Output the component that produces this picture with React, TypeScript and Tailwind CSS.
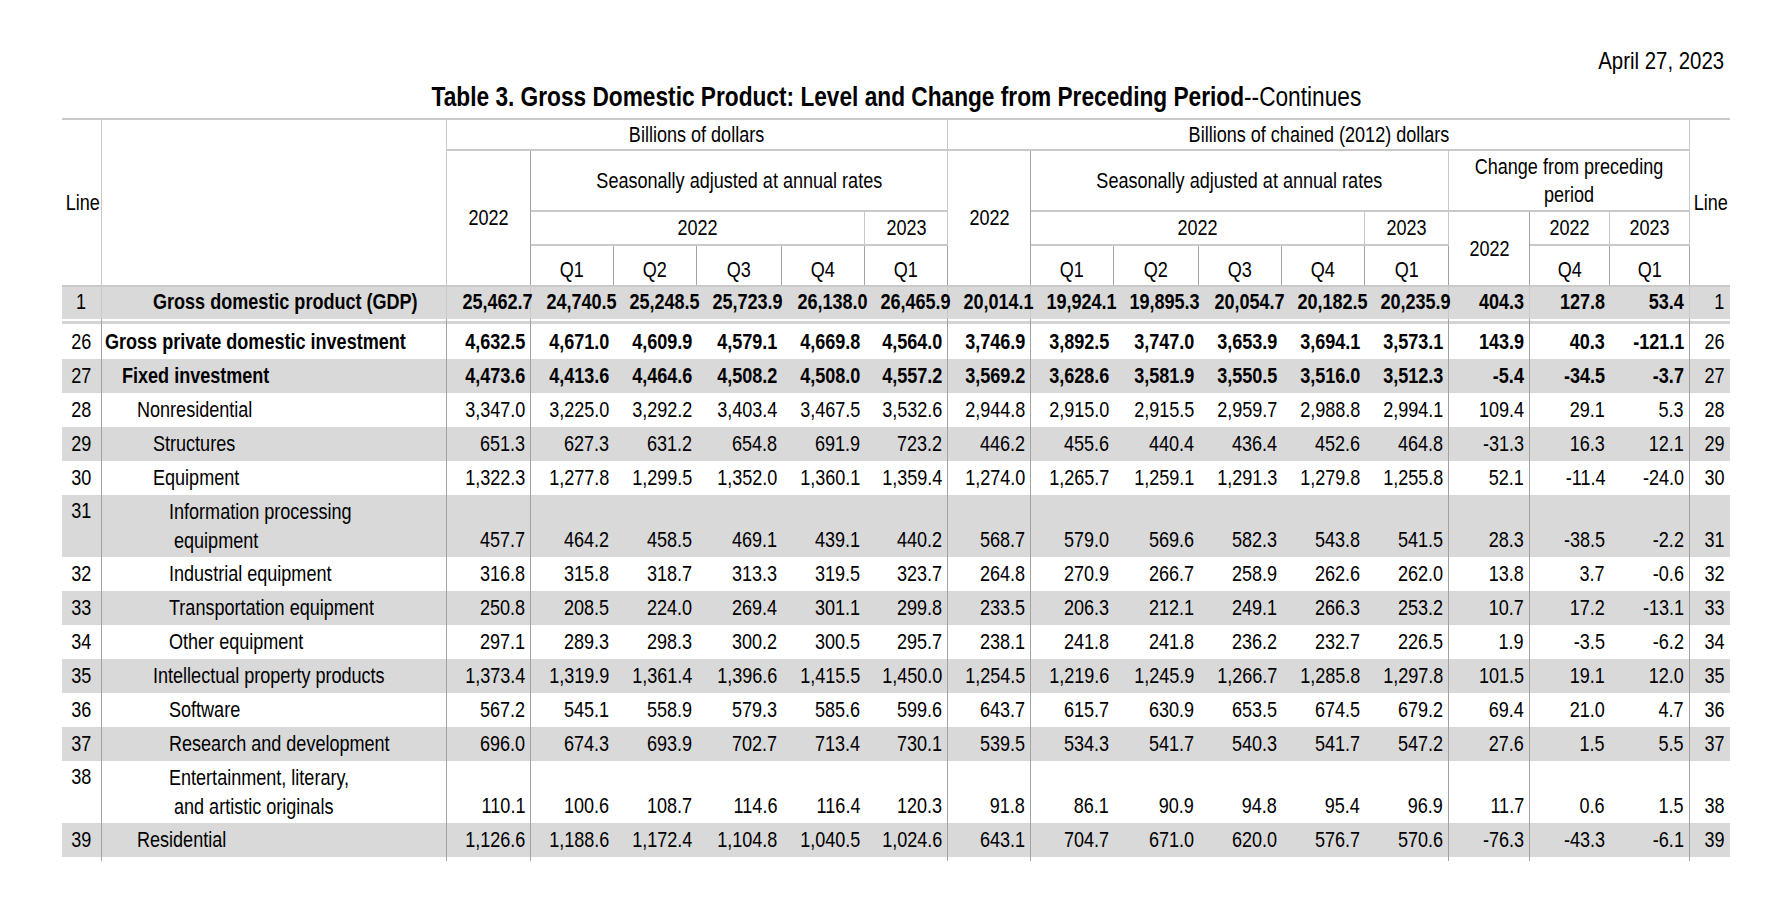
import React from 'react';

type Row = {
  line: string;
  label: string[];
  indent: string;
  bold?: boolean;
  shade?: boolean;
  v: string[];
};

const rows: Row[] = [
  { line: '26', label: ['Gross private domestic investment'], indent: 'pl-[3px]', bold: true, v: ['4,632.5', '4,671.0', '4,609.9', '4,579.1', '4,669.8', '4,564.0', '3,746.9', '3,892.5', '3,747.0', '3,653.9', '3,694.1', '3,573.1', '143.9', '40.3', '-121.1'] },
  { line: '27', label: ['Fixed investment'], indent: 'pl-[20px]', bold: true, shade: true, v: ['4,473.6', '4,413.6', '4,464.6', '4,508.2', '4,508.0', '4,557.2', '3,569.2', '3,628.6', '3,581.9', '3,550.5', '3,516.0', '3,512.3', '-5.4', '-34.5', '-3.7'] },
  { line: '28', label: ['Nonresidential'], indent: 'pl-[35px]', v: ['3,347.0', '3,225.0', '3,292.2', '3,403.4', '3,467.5', '3,532.6', '2,944.8', '2,915.0', '2,915.5', '2,959.7', '2,988.8', '2,994.1', '109.4', '29.1', '5.3'] },
  { line: '29', label: ['Structures'], indent: 'pl-[51px]', shade: true, v: ['651.3', '627.3', '631.2', '654.8', '691.9', '723.2', '446.2', '455.6', '440.4', '436.4', '452.6', '464.8', '-31.3', '16.3', '12.1'] },
  { line: '30', label: ['Equipment'], indent: 'pl-[51px]', v: ['1,322.3', '1,277.8', '1,299.5', '1,352.0', '1,360.1', '1,359.4', '1,274.0', '1,265.7', '1,259.1', '1,291.3', '1,279.8', '1,255.8', '52.1', '-11.4', '-24.0'] },
  { line: '31', label: ['Information processing', 'equipment'], indent: 'pl-[67px]', shade: true, v: ['457.7', '464.2', '458.5', '469.1', '439.1', '440.2', '568.7', '579.0', '569.6', '582.3', '543.8', '541.5', '28.3', '-38.5', '-2.2'] },
  { line: '32', label: ['Industrial equipment'], indent: 'pl-[67px]', v: ['316.8', '315.8', '318.7', '313.3', '319.5', '323.7', '264.8', '270.9', '266.7', '258.9', '262.6', '262.0', '13.8', '3.7', '-0.6'] },
  { line: '33', label: ['Transportation equipment'], indent: 'pl-[67px]', shade: true, v: ['250.8', '208.5', '224.0', '269.4', '301.1', '299.8', '233.5', '206.3', '212.1', '249.1', '266.3', '253.2', '10.7', '17.2', '-13.1'] },
  { line: '34', label: ['Other equipment'], indent: 'pl-[67px]', v: ['297.1', '289.3', '298.3', '300.2', '300.5', '295.7', '238.1', '241.8', '241.8', '236.2', '232.7', '226.5', '1.9', '-3.5', '-6.2'] },
  { line: '35', label: ['Intellectual property products'], indent: 'pl-[51px]', shade: true, v: ['1,373.4', '1,319.9', '1,361.4', '1,396.6', '1,415.5', '1,450.0', '1,254.5', '1,219.6', '1,245.9', '1,266.7', '1,285.8', '1,297.8', '101.5', '19.1', '12.0'] },
  { line: '36', label: ['Software'], indent: 'pl-[67px]', v: ['567.2', '545.1', '558.9', '579.3', '585.6', '599.6', '643.7', '615.7', '630.9', '653.5', '674.5', '679.2', '69.4', '21.0', '4.7'] },
  { line: '37', label: ['Research and development'], indent: 'pl-[67px]', shade: true, v: ['696.0', '674.3', '693.9', '702.7', '713.4', '730.1', '539.5', '534.3', '541.7', '540.3', '541.7', '547.2', '27.6', '1.5', '5.5'] },
  { line: '38', label: ['Entertainment, literary,', 'and artistic originals'], indent: 'pl-[67px]', v: ['110.1', '100.6', '108.7', '114.6', '116.4', '120.3', '91.8', '86.1', '90.9', '94.8', '95.4', '96.9', '11.7', '0.6', '1.5'] },
  { line: '39', label: ['Residential'], indent: 'pl-[35px]', shade: true, v: ['1,126.6', '1,188.6', '1,172.4', '1,104.8', '1,040.5', '1,024.6', '643.1', '704.7', '671.0', '620.0', '576.7', '570.6', '-76.3', '-43.3', '-6.1'] },
];

const gdp = ['25,462.7', '24,740.5', '25,248.5', '25,723.9', '26,138.0', '26,465.9', '20,014.1', '19,924.1', '19,895.3', '20,054.7', '20,182.5', '20,235.9', '404.3', '127.8', '53.4'];

const widths = [40, 345, 84, 83, 83, 85, 83, 83, 83, 83, 85, 83, 83, 84, 81, 80, 80, 40];

// value columns (index into v) that carry a rule on their right side in the body
const ruled = [0, 5, 6, 11, 12, 14];
// same rules, indexed over all table columns
const ruledCols = [0, 1, 2, 7, 8, 13, 14, 16];

const V = 'border-r border-[#a3a3a3]';
const HT = 'border-t-2 border-[#c9c9c9]';
const HB = 'border-b-2 border-[#c9c9c9]';
const hd = 'p-0 text-center font-normal align-middle';

// Arial Narrow is not installed, so squeeze Liberation Sans to its width
function N({ children, o = 'origin-right', s = 'scale-x-[0.82]' }: { children: React.ReactNode; o?: string; s?: string }) {
  return <span className={`inline-block whitespace-nowrap ${s} ${o}`}>{children}</span>;
}

function ValueCells({ v, double }: { v: string[]; double?: boolean }) {
  return (
    <>
      {v.map((x, i) => (
        <td
          key={i}
          className={`p-0 pr-[5px] text-right whitespace-nowrap ${double ? 'align-bottom pb-[3px]' : 'align-middle'} ${ruled.includes(i) ? V : ''}`}
        >
          <N>{x}</N>
        </td>
      ))}
    </>
  );
}

export default function App() {
  return (
    <div className="w-[1792px] h-[916px] overflow-hidden bg-white text-black [font-family:'Liberation_Sans',Arial,sans-serif]">
      <div className="pt-[47px] pr-[68px] text-right text-[24px] leading-[28px]">
        <N s="scale-x-[0.85]">April 27, 2023</N>
      </div>
      <div className="mt-[8px] text-center text-[27px] leading-[28px] whitespace-nowrap">
        <N o="origin-center" s="scale-x-[0.84]">
          <span className="font-bold">Table 3. Gross Domestic Product: Level and Change from Preceding Period</span>
          --Continues
        </N>
      </div>

      <table className="ml-[62px] mt-[7px] w-[1668px] table-fixed border-separate border-spacing-0 text-[22px] leading-[28px]">
        <colgroup>
          {widths.map((w, i) => (
            <col key={i} style={{ width: w }} />
          ))}
        </colgroup>
        <thead>
          <tr className="h-[33px]">
            <th rowSpan={4} className={`${hd} ${HT} ${V}`}><N o="origin-center">Line</N></th>
            <th rowSpan={4} className={`${hd} ${HT} ${V}`}></th>
            <th colSpan={6} className={`${hd} ${HT} ${HB} ${V}`}><N o="origin-center">Billions of dollars</N></th>
            <th colSpan={9} className={`${hd} ${HT} ${HB} ${V}`}><N o="origin-center">Billions of chained (2012) dollars</N></th>
            <th rowSpan={4} className={`${hd} ${HT}`}><N o="origin-center">Line</N></th>
          </tr>
          <tr className="h-[61px]">
            <th rowSpan={3} className={`${hd} ${V}`}><N o="origin-center">2022</N></th>
            <th colSpan={5} className={`${hd} ${HB} ${V}`}><N o="origin-center">Seasonally adjusted at annual rates</N></th>
            <th rowSpan={3} className={`${hd} ${V}`}><N o="origin-center">2022</N></th>
            <th colSpan={5} className={`${hd} ${HB} ${V}`}><N o="origin-center">Seasonally adjusted at annual rates</N></th>
            <th colSpan={3} className={`${hd} ${HB} ${V}`}>
              <N o="origin-center">
                Change from preceding
                <br />
                period
              </N>
            </th>
          </tr>
          <tr className="h-[34px]">
            <th colSpan={4} className={`${hd} ${HB} ${V}`}><N o="origin-center">2022</N></th>
            <th className={`${hd} ${HB} ${V}`}><N o="origin-center">2023</N></th>
            <th colSpan={4} className={`${hd} ${HB} ${V}`}><N o="origin-center">2022</N></th>
            <th className={`${hd} ${HB} ${V}`}><N o="origin-center">2023</N></th>
            <th rowSpan={2} className={`${hd} ${V}`}><N o="origin-center">2022</N></th>
            <th className={`${hd} ${HB} ${V}`}><N o="origin-center">2022</N></th>
            <th className={`${hd} ${HB} ${V}`}><N o="origin-center">2023</N></th>
          </tr>
          <tr className="h-[39px]">
            {['Q1', 'Q2', 'Q3', 'Q4', 'Q1', 'Q1', 'Q2', 'Q3', 'Q4', 'Q1', 'Q4', 'Q1'].map((q, i) => (
              <th key={i} className={`p-0 pt-[9px] text-center font-normal ${V}`}>
                <N o="origin-center">{q}</N>
              </th>
            ))}
          </tr>
        </thead>
        <tbody>
          <tr className="h-[34px] bg-[#d9d9d9] font-bold">
            <td className={`p-0 pb-[2px] text-center font-normal ${HT} ${V}`}><N o="origin-center">1</N></td>
            <td className={`p-0 pb-[2px] pl-[51px] ${HT} ${V}`}><N o="origin-left">Gross domestic product (GDP)</N></td>
            {gdp.map((x, i) => (
              <td key={i} className={`p-0 pb-[2px] pr-[5px] text-right whitespace-nowrap ${HT} ${ruled.includes(i) ? V : ''}`}>
                <N>{x}</N>
              </td>
            ))}
            <td className={`p-0 pb-[2px] pr-[6px] text-right font-normal ${HT}`}><N>1</N></td>
          </tr>
          <tr className="h-[6px]">
            {widths.map((_, i) => (
              <td key={i} className={`p-0 align-top ${ruledCols.includes(i) ? V : ''}`}>
                <div className="mt-[2px] h-[3px] bg-[#d4d4d4]" />
              </td>
            ))}
          </tr>
          {rows.map((r) => {
            const double = r.label.length > 1;
            return (
              <tr
                key={r.line}
                className={`${double ? 'h-[62px]' : 'h-[34px]'} ${r.shade ? 'bg-[#d9d9d9]' : ''} ${r.bold ? 'font-bold' : ''}`}
              >
                <td className={`p-0 text-center font-normal ${double ? 'align-top pt-[2px]' : ''} ${V}`}>
                  <N o="origin-center">{r.line}</N>
                </td>
                <td className={`p-0 ${r.indent} ${double ? 'align-top pt-[2px] leading-[29px]' : ''} ${V}`}>
                  {r.label.map((l, i) => (
                    <div key={i} className={i > 0 ? 'pl-[5px]' : ''}>
                      <N o="origin-left">{l}</N>
                    </div>
                  ))}
                </td>
                <ValueCells v={r.v} double={double} />
                <td className={`p-0 pr-[6px] text-right font-normal ${double ? 'align-bottom pb-[3px]' : ''}`}>
                  <N>{r.line}</N>
                </td>
              </tr>
            );
          })}
          <tr className="h-[4px]">
            {widths.map((_, i) => (
              <td key={i} className={`p-0 ${ruledCols.includes(i) ? V : ''}`} />
            ))}
          </tr>
        </tbody>
      </table>
    </div>
  );
}
